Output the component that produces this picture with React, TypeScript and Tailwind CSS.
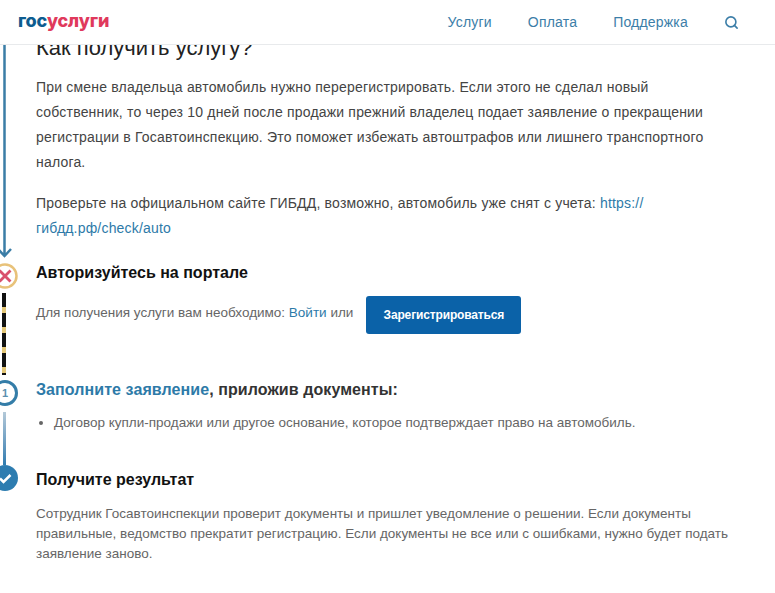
import { Search } from "lucide-react";

const LINK = "text-[#2d7aa8]";

function Header() {
  return (
    <header className="absolute left-0 top-0 z-10 flex h-[45px] w-full items-center justify-between border-b border-[#e8eaec] bg-white pl-[18px] pr-[36px]">
      <div className="font-['Inter',sans-serif] text-[18px] font-extrabold leading-none tracking-[-0.15px] pb-[2px]">
        <span className="text-[#0d5c8f]">гос</span>
        <span className="text-[#e0395c]">услуги</span>
      </div>
      <nav className="flex items-center text-[14px] tracking-[0.2px] text-[#3c7ea8]">
        <a className="mr-[36px]">Услуги</a>
        <a className="mr-[36px]">Оплата</a>
        <a className="mr-[36px]">Поддержка</a>
        <Search size={15} strokeWidth={2.6} />
      </nav>
    </header>
  );
}

function CrossMarker() {
  return (
    <svg width="26" height="26" viewBox="0 0 26 26" className="-ml-[8px] shrink-0">
      <circle cx="13" cy="13" r="11.5" fill="white" stroke="#e8c27a" strokeWidth="2.5" />
      <path d="M7.5 7.5l11 11M18.5 7.5l-11 11" stroke="#d9506c" strokeWidth="2.8" />
    </svg>
  );
}

function NumberMarker() {
  return (
    <div className="-ml-[8px] flex h-[26px] w-[26px] shrink-0 items-center justify-center rounded-full border-[3px] border-[#347da8] bg-white text-[11px] font-bold text-[#5b8fae]">
      1
    </div>
  );
}

function CheckMarker() {
  return (
    <svg width="26" height="26" viewBox="0 0 26 26" className="-ml-[8px] shrink-0">
      <circle cx="13" cy="13" r="13" fill="#2d7cb0" />
      <path d="M8 13.5l3.5 3.5L18.5 10" fill="none" stroke="white" strokeWidth="2.5" />
    </svg>
  );
}

export default function App() {
  return (
    <div className="relative h-[593px] w-[775px] overflow-hidden bg-white font-['Liberation_Sans',Arial,sans-serif] text-[14px] text-[#444]">
      <Header />

      {/* intro block */}
      <section className="flex h-[263px]">
        <div className="w-[36px] shrink-0">
          <svg width="14" height="258" viewBox="0 0 14 258">
            <path d="M4.5 0V255M-2 249l6.5 7L11 249" fill="none" stroke="#3b7da6" strokeWidth="2.5" />
          </svg>
        </div>
        <div className="w-[695px] pt-[36px]">
          <h2 className="text-[22px] leading-[24px] text-[#222]">Как получить услугу?</h2>
          <p className="mt-[15px] leading-[25px] tracking-[0.19px]">
            При смене владельца автомобиль нужно перерегистрировать. Если этого не сделал новый
            <br />
            собственник, то через 10 дней после продажи прежний владелец подает заявление о прекращении
            <br />
            регистрации в Госавтоинспекцию. Это поможет избежать автоштрафов или лишнего транспортного
            <br />
            налога.
          </p>
          <p className="mt-[16px] leading-[25px] tracking-[0.19px]">
            Проверьте на официальном сайте ГИБДД, возможно, автомобиль уже снят с учета:{" "}
            <a className={LINK}>
              https://
              <br />
              гибдд.рф/check/auto
            </a>
          </p>
        </div>
      </section>

      {/* step: auth */}
      <section className="flex h-[117px]">
        <div className="flex w-[36px] shrink-0 flex-col">
          <CrossMarker />
          <div className="ml-[2px] mt-[4px] h-[82px] w-[4px] bg-[repeating-linear-gradient(180deg,#111_0,#111_14px,#e3c777_14px,#e3c777_20px)]" />
        </div>
        <div className="pt-[1px]">
          <h3 className="text-[16px] font-bold leading-[18px] text-[#111]">Авторизуйтесь на портале</h3>
          <div className="mt-[14px] flex items-center">
            <span className="mb-[4px] text-[13.5px] text-[#666]">
              Для получения услуги вам необходимо: <a className={LINK}>Войти</a> или
            </span>
            <button className="ml-[13px] h-[38px] w-[155px] rounded-[3px] bg-[#0b62a8] text-[12px] font-bold tracking-[-0.15px] text-white">
              Зарегистрироваться
            </button>
          </div>
        </div>
      </section>

      {/* step: form */}
      <section className="flex h-[85px]">
        <div className="flex w-[36px] shrink-0 flex-col">
          <NumberMarker />
          <div className="ml-[3px] mt-[6px] h-[53px] w-[3px] bg-gradient-to-b from-[#b4c9d8] to-[#2d7cb0]" />
        </div>
        <div className="pt-[1px]">
          <h3 className="text-[16px] font-bold leading-[18px] tracking-[0.08px] text-[#333]">
            <span className={LINK}>Заполните заявление</span>, приложив документы:
          </h3>
          <ul className="mt-[14px] flex items-center text-[13.5px] text-[#666]">
            <li className="flex items-center leading-[20px]">
              <span className="ml-[3px] mr-[11px] h-[4px] w-[4px] rounded-full bg-[#666]" />
              Договор купли-продажи или другое основание, которое подтверждает право на автомобиль.
            </li>
          </ul>
        </div>
      </section>

      {/* step: result */}
      <section className="flex">
        <div className="w-[36px] shrink-0">
          <CheckMarker />
        </div>
        <div className="w-[700px] pt-[6px]">
          <h3 className="text-[16px] font-bold leading-[18px] text-[#111]">Получите результат</h3>
          <p className="mt-[15px] text-[13.5px] leading-[20px] text-[#666]">
            Сотрудник Госавтоинспекции проверит документы и пришлет уведомление о решении. Если документы
            <br />
            правильные, ведомство прекратит регистрацию. Если документы не все или с ошибками, нужно будет подать
            <br />
            заявление заново.
          </p>
        </div>
      </section>
    </div>
  );
}
